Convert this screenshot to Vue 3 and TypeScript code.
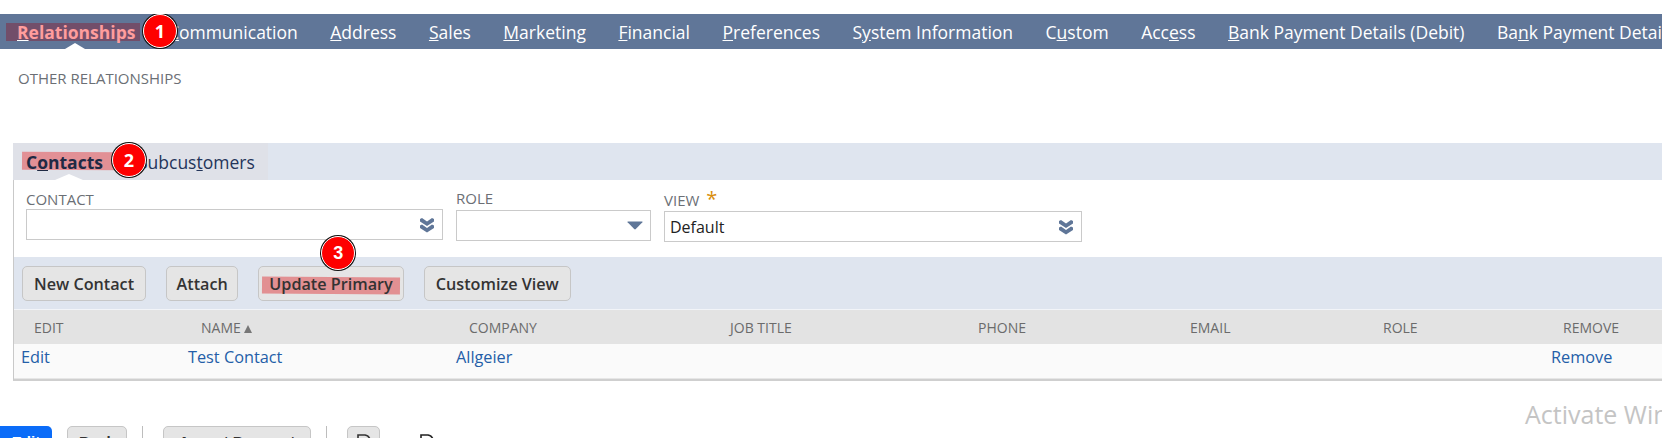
<template>
  <div class="page">
    <nav class="main-tabs">
      <a v-for="tab in mainTabs" :key="tab.pre + tab.key" class="main-tab" :class="{ active: tab.active }">
        {{ tab.pre }}<u>{{ tab.key }}</u>{{ tab.post }}
      </a>
      <span class="mark mark-main"></span>
      <span class="notch notch-main"></span>
      <span class="badge badge-1">1</span>
    </nav>

    <div class="section-title">OTHER RELATIONSHIPS</div>

    <section class="panel">
      <div class="sub-band">
        <div class="sub-tabs">
          <a class="sub-tab active">C<u>o</u>ntacts</a>
          <a class="sub-tab">Subcus<u>t</u>omers</a>
        </div>
        <span class="mark mark-sub"></span>
        <span class="notch notch-sub"></span>
        <span class="badge badge-2">2</span>
      </div>

      <div class="body">
        <div class="form-row">
          <div class="field field-contact">
            <label>CONTACT</label>
            <div class="input">
              <svg class="chevrons" viewBox="0 0 16 16"><path d="M1 2l2-1 5 3.5L13 1l2 1v2.5L8 9 1 4.5zM1 8.5l2-1 5 3.5 5-3.5 2 1V11l-7 4.5L1 11z" /></svg>
            </div>
          </div>
          <div class="field field-role">
            <label>ROLE</label>
            <div class="input">
              <svg class="caret" viewBox="0 0 16 8"><path d="M1 0h14q1 0 .4.8L8.8 7.6q-.8.7-1.6 0L.6.8Q0 0 1 0z" /></svg>
            </div>
          </div>
          <div class="field field-view">
            <label>VIEW <span class="required">*</span></label>
            <div class="input">
              <span>Default</span>
              <svg class="chevrons" viewBox="0 0 16 16"><path d="M1 2l2-1 5 3.5L13 1l2 1v2.5L8 9 1 4.5zM1 8.5l2-1 5 3.5 5-3.5 2 1V11l-7 4.5L1 11z" /></svg>
            </div>
          </div>
        </div>

        <div class="button-band">
          <button class="btn">New Contact</button>
          <button class="btn btn-attach">Attach</button>
          <button class="btn btn-update">
            <span class="mark mark-update"></span>
            <span class="btn-label">Update Primary</span>
            <span class="badge badge-3">3</span>
          </button>
          <button class="btn">Customize View</button>
        </div>

        <div class="table">
          <div class="table-row table-head">
            <span v-for="col in columns" :key="col.label" :style="{ width: col.head + 'px' }">
              {{ col.label }}<i v-if="col.sorted" class="sort"></i>
            </span>
          </div>
          <div class="table-row table-data">
            <a v-for="cell in cells" :key="cell.text" :style="{ width: cell.width + 'px' }">{{ cell.text }}</a>
          </div>
        </div>
      </div>
    </section>

    <div class="actions">
      <button class="action primary">Edit</button>
      <button class="action back">Back</button>
      <span class="divider"></span>
      <button class="action accept">Accept Payment</button>
      <span class="divider"></span>
      <button class="action icon-btn">
        <svg viewBox="0 0 16 20"><path d="M2 1h7q5 1 5 6v12H2z" fill="none" stroke="#333" stroke-width="1.6" /></svg>
      </button>
      <svg class="plain-icon" viewBox="0 0 16 20"><path d="M2 1h7q5 1 5 6v12H2z" fill="none" stroke="#222" stroke-width="1.6" /></svg>
    </div>

    <div class="watermark">Activate Windows</div>
  </div>
</template>

<script setup lang="ts">
interface MainTab {
  pre: string
  key: string
  post: string
  active?: boolean
}

const mainTabs: MainTab[] = [
  { pre: '', key: 'R', post: 'elationships', active: true },
  { pre: '', key: 'C', post: 'ommunication' },
  { pre: '', key: 'A', post: 'ddress' },
  { pre: '', key: 'S', post: 'ales' },
  { pre: '', key: 'M', post: 'arketing' },
  { pre: '', key: 'F', post: 'inancial' },
  { pre: '', key: 'P', post: 'references' },
  { pre: 'S', key: 'y', post: 'stem Information' },
  { pre: 'C', key: 'u', post: 'stom' },
  { pre: 'Acc', key: 'e', post: 'ss' },
  { pre: '', key: 'B', post: 'ank Payment Details (Debit)' },
  { pre: 'Ba', key: 'n', post: 'k Payment Details (Credit)' }
]

const columns = [
  { label: 'EDIT', head: 167 },
  { label: 'NAME', head: 268, sorted: true },
  { label: 'COMPANY', head: 261 },
  { label: 'JOB TITLE', head: 248 },
  { label: 'PHONE', head: 212 },
  { label: 'EMAIL', head: 193 },
  { label: 'ROLE', head: 180 },
  { label: 'REMOVE', head: 100 }
]

const cells = [
  { text: 'Edit', width: 167 },
  { text: 'Test Contact', width: 268 },
  { text: 'Allgeier', width: 1095 },
  { text: 'Remove', width: 100 }
]
</script>

<style>
html,
body {
  margin: 0;
  background: #fff;
  overflow: hidden;
}
</style>

<style scoped>
.page {
  position: relative;
  width: 1662px;
  height: 438px;
  padding-top: 14px;
  box-sizing: border-box;
  overflow: hidden;
  background: #fff;
  font-family: "Open Sans", "Liberation Sans", sans-serif;
}

.main-tabs {
  position: relative;
  display: flex;
  gap: 32.5px;
  height: 35px;
  padding-left: 17px;
  align-items: center;
  background: #607698;
  white-space: nowrap;
  overflow: hidden;
  font-size: 17.5px;
  color: #fff;
}
.main-tab {
  position: relative;
  z-index: 1;
}
.main-tab.active {
  font-weight: 700;
  color: #ff9d9d;
}
.main-tab.active u {
  text-decoration-color: #fff;
}

.mark {
  position: absolute;
  display: block;
}
.mark-main {
  left: 6px;
  top: 9px;
  width: 134px;
  height: 18px;
  background: rgba(130, 45, 70, 0.55);
  z-index: 0;
}
.notch {
  position: absolute;
  width: 0;
  height: 0;
  border-left: 10px solid transparent;
  border-right: 10px solid transparent;
  border-bottom: 6px solid #fff;
}
.notch-main {
  left: 65px;
  bottom: 0;
}
.notch-sub {
  left: 42px;
  bottom: 0;
  border-left-width: 14px;
  border-right-width: 14px;
}

.badge {
  position: absolute;
  z-index: 3;
  box-sizing: content-box;
  width: 32px;
  height: 32px;
  border-radius: 50%;
  background: #fe0000;
  border: 1px solid #fff;
  box-shadow: 0 0 0 1px #111;
  display: flex;
  align-items: center;
  justify-content: center;
  font-family: "Open Sans", sans-serif;
  font-size: 18px;
  font-weight: 700;
  color: #fff;
}
.badge-1 {
  left: 143px;
  top: 0;
}
.badge-2 {
  left: 99px;
  top: 0;
}
.badge-3 {
  left: 62px;
  top: -31px;
  font-family: "Liberation Sans", sans-serif;
}

.section-title {
  height: 59px;
  padding: 19px 0 0 18px;
  box-sizing: border-box;
  font-size: 15px;
  line-height: 20px;
  color: #6b6f75;
}

.panel {
  margin: 35px 0 0 13px;
  width: 1700px;
}
.sub-band {
  position: relative;
  height: 37px;
  background: #dfe5ef;
}
.sub-tabs {
  display: flex;
  gap: 35px;
  height: 100%;
  width: 255px;
  padding-left: 13px;
  box-sizing: border-box;
  align-items: center;
  background: #dfe1e8;
  font-size: 17.5px;
  color: #24355a;
  white-space: nowrap;
}
.sub-tab {
  position: relative;
  z-index: 1;
}
.sub-tab.active {
  font-weight: 700;
  color: #1f2a44;
}
.mark-sub {
  left: 9px;
  top: 9px;
  width: 100px;
  height: 18px;
  background: #e29095;
  transform: rotate(0.4deg);
}

.body {
  border-left: 1px solid #c9c9c9;
  border-bottom: 2px solid #cfcfcf;
}
.form-row {
  display: flex;
  height: 77px;
  background: #fff;
  padding-left: 12px;
  box-sizing: border-box;
}
.field {
  display: flex;
  flex-direction: column;
}
.field label {
  font-size: 15px;
  line-height: 18px;
  color: #6b6f75;
}
.field-contact {
  width: 417px;
  margin-right: 13px;
  padding-top: 10px;
}
.field-role {
  width: 195px;
  margin-right: 13px;
  padding-top: 9px;
}
.field-view {
  width: 418px;
  padding-top: 11px;
}
.required {
  color: #d98e0b;
  font-size: 20px;
  line-height: 14px;
  margin-left: 3px;
}
.input {
  display: flex;
  align-items: center;
  justify-content: space-between;
  height: 31px;
  margin-top: 1px;
  padding: 0 7px 0 5px;
  border: 1px solid #cacaca;
  box-sizing: border-box;
  background: #fff;
  font-size: 16px;
  color: #222;
}
.field-role .input {
  margin-top: 3px;
}
.field-view .input {
  margin-top: 2px;
}
.chevrons {
  width: 16px;
  height: 16px;
  margin-left: auto;
  fill: #5f7698;
}
.caret {
  flex: none;
  width: 16px;
  height: 9px;
  margin-left: auto;
  fill: #5f7698;
}

.button-band {
  display: flex;
  gap: 20px;
  height: 52px;
  padding: 9px 0 0 8px;
  box-sizing: border-box;
  background: #dfe5ef;
}
.btn {
  position: relative;
  height: 35px;
  padding: 0 11px;
  border: 1px solid #c6c6c6;
  border-radius: 5px;
  background: #e5e5e5;
  font-family: inherit;
  font-size: 16.2px;
  font-weight: 600;
  color: #333;
  white-space: nowrap;
}
.btn-attach {
  padding: 0 9.5px;
}
.btn-update {
  padding: 0 10px;
}
.btn-label {
  position: relative;
}
.mark-update {
  left: 3px;
  top: 10px;
  width: 138px;
  height: 17px;
  background: #e29092;
  transform: rotate(0.4deg);
}

.table {
  border-top: 1px solid #f2f4f8;
}
.table-row {
  display: flex;
  white-space: nowrap;
}
.table-head {
  height: 34px;
  padding: 0 0 0 20px;
  align-items: center;
  background: #e3e3e3;
  font-size: 14px;
  color: #6b6b6b;
}
.sort {
  display: inline-block;
  margin-left: 3px;
  border-left: 4px solid transparent;
  border-right: 4px solid transparent;
  border-bottom: 8px solid #777;
}
.table-data {
  height: 35px;
  padding-left: 7px;
  padding-bottom: 8px;
  align-items: center;
  background: #fafafa;
  border-bottom: 1px solid #e6e6e6;
  box-sizing: border-box;
  font-size: 16.3px;
  color: #245ea8;
}

.actions {
  display: flex;
  align-items: flex-start;
  margin-top: 45px;
}
.action {
  height: 30px;
  border: 1px solid #c6c6c6;
  border-radius: 5px;
  background: #e5e5e5;
  font-family: "Liberation Sans", sans-serif;
  font-size: 15px;
  font-weight: 700;
  color: #333;
  padding: 0;
}
.primary {
  width: 52px;
  border: 0;
  background: #0b6cf8;
  color: #fff;
  border-radius: 0 5px 5px 0;
}
.back {
  width: 60px;
  margin-left: 15px;
}
.divider {
  width: 1px;
  height: 14px;
  margin: 0 20px 0 15px;
  background: #bdbdbd;
}
.accept {
  width: 148px;
}
.icon-btn {
  width: 33px;
}
.icon-btn svg {
  display: block;
  width: 16px;
  height: 20px;
  margin: 6px auto 0;
}
.plain-icon {
  width: 16px;
  height: 20px;
  margin: 8px 0 0 39px;
}

.watermark {
  position: absolute;
  left: 1525px;
  top: 399px;
  font-family: "Open Sans", sans-serif;
  font-size: 25px;
  line-height: 31px;
  color: #c4c4c4;
  white-space: nowrap;
}
</style>
